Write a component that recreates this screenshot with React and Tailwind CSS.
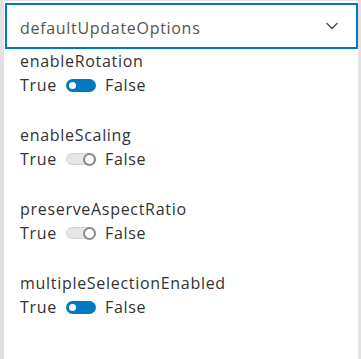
import { ChevronDown } from 'lucide-react';

const options = [
  { name: 'enableRotation', on: true },
  { name: 'enableScaling', on: false },
  { name: 'preserveAspectRatio', on: false },
  { name: 'multipleSelectionEnabled', on: true },
];

function Toggle({ on }) {
  return on ? (
    <span className="flex h-[13px] w-[30px] items-center rounded-full bg-[#0079c1] px-[1px]">
      <span className="h-[11px] w-[11px] rounded-full border-2 border-[#0079c1] bg-white" />
    </span>
  ) : (
    <span className="flex h-[12px] w-[30px] items-center justify-end rounded-full border border-[#d4d4d4] bg-[#e6e6e6]">
      <span className="-mr-[1px] h-[13px] w-[13px] rounded-full border-2 border-[#8a8a8a] bg-white" />
    </span>
  );
}

export default function App() {
  return (
    <div
      className="flex h-[359px] w-[361px] bg-[#e2e2e2] text-[#323232] tracking-[0.7px]"
      style={{ fontFamily: '"Open Sans", sans-serif' }}
    >
      <div className="ml-[4px] mr-[3px] mt-[1px] flex-1 bg-white pt-[2px]">
        <div className="ml-[1px] flex h-[46px] items-center justify-between border-2 border-[#0079c1] pl-[13px] pr-[14px] pt-[4px]">
          <span className="text-[16px] text-[#555]">defaultUpdateOptions</span>
          <ChevronDown className="-mt-[4px] h-5 w-5 text-[#444]" strokeWidth={1.5} />
        </div>
        <div className="flex flex-col gap-[26px] pl-[16px]">
          {options.map((o) => (
            <div key={o.name} className="flex flex-col text-[16px] leading-[24px]">
              <span>{o.name}</span>
              <div className="flex items-center gap-[9px]">
                <span>True</span>
                <Toggle on={o.on} />
                <span>False</span>
              </div>
            </div>
          ))}
        </div>
      </div>
    </div>
  );
}
